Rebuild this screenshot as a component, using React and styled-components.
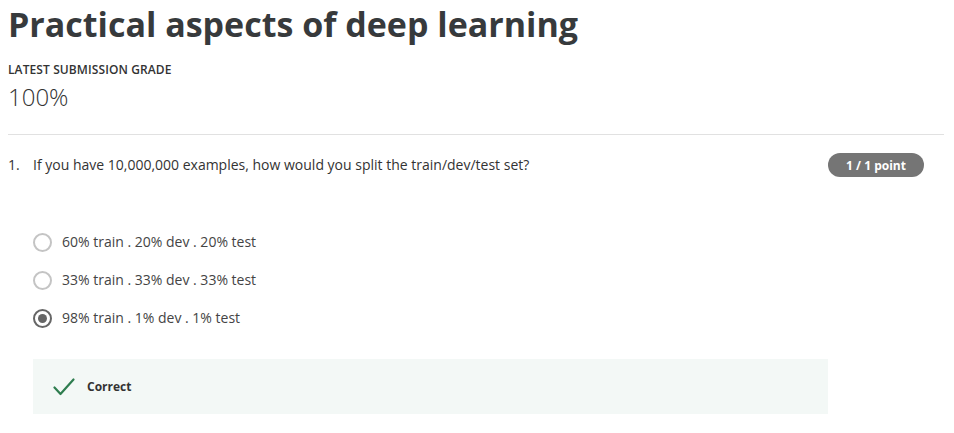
import React from "react";
import styled, { createGlobalStyle } from "styled-components";

const Global = createGlobalStyle`
  html, body { margin: 0; padding: 0; background: #fff; }
  body { font-family: "Open Sans", "Noto Sans", sans-serif; color: #333; }
`;

const Page = styled.div`
  padding: 0 10px 0 8px;
`;

const Title = styled.h1`
  margin: 0;
  padding-top: 3px;
  font-size: 34px;
  line-height: 42px;
  font-weight: 700;
  color: #373a3c;
`;

const GradeLabel = styled.div`
  margin-top: 17px;
  font-size: 12px;
  line-height: 16px;
  font-weight: 600;
  color: #333;
  letter-spacing: 0.1px;
`;

const GradeValue = styled.div`
  margin-top: 4px;
  font-size: 24px;
  line-height: 30px;
  font-weight: 300;
  color: #333;
`;

const Divider = styled.hr`
  margin: 22px 0 0;
  border: 0;
  border-top: 1px solid #e1e1e1;
`;

const QuestionRow = styled.div`
  display: flex;
  align-items: center;
  justify-content: space-between;
  margin-top: 18px;
  padding-right: 20px;
`;

const QuestionText = styled.div`
  display: flex;
  font-size: 14px;
  line-height: 20px;
  color: #333;
`;

const QNum = styled.span`
  width: 25px;
`;

const Badge = styled.span`
  display: inline-flex;
  align-items: center;
  justify-content: center;
  width: 96px;
  height: 24px;
  border-radius: 12px;
  background: #757575;
  color: #fff;
  font-size: 12px;
  font-weight: 700;
`;

const Options = styled.div`
  display: flex;
  flex-direction: column;
  gap: 18px;
  margin-top: 55px;
  padding-left: 25px;
`;

const Option = styled.label`
  display: flex;
  align-items: center;
  gap: 10px;
  font-size: 14px;
  line-height: 20px;
  color: #444;
`;

const Radio = styled.span`
  box-sizing: border-box;
  width: 19px;
  height: 19px;
  border-radius: 50%;
  border: 2px solid ${(p) => (p.checked ? "#666" : "#c4c4c4")};
  display: flex;
  align-items: center;
  justify-content: center;
  &::after {
    content: "";
    width: 9px;
    height: 9px;
    border-radius: 50%;
    background: #666;
    display: ${(p) => (p.checked ? "block" : "none")};
  }
`;

const Feedback = styled.div`
  display: flex;
  align-items: center;
  gap: 12px;
  margin: 31px 0 0 25px;
  width: 795px;
  height: 55px;
  box-sizing: border-box;
  padding-left: 20px;
  background: #f3f8f6;
`;

const FeedbackText = styled.span`
  font-size: 12px;
  font-weight: 700;
  color: #333;
`;

const options = [
  "60% train . 20% dev . 20% test",
  "33% train . 33% dev . 33% test",
  "98% train . 1% dev . 1% test",
];

export default function App() {
  return (
    <Page>
      <Global />
      <Title>Practical aspects of deep learning</Title>
      <GradeLabel>LATEST SUBMISSION GRADE</GradeLabel>
      <GradeValue>100%</GradeValue>
      <Divider />
      <QuestionRow>
        <QuestionText>
          <QNum>1.</QNum>
          <span>If you have 10,000,000 examples, how would you split the train/dev/test set?</span>
        </QuestionText>
        <Badge>1 / 1 point</Badge>
      </QuestionRow>
      <Options>
        {options.map((o, i) => (
          <Option key={o}>
            <Radio checked={i === 2} />
            <span>{o}</span>
          </Option>
        ))}
      </Options>
      <Feedback>
        <svg width="22" height="18" viewBox="0 0 22 18" fill="none">
          <path d="M1.5 9.5 L7.5 16 L20.5 1.5" stroke="#2e7d4f" strokeWidth="2.2" strokeLinecap="round" strokeLinejoin="round" />
        </svg>
        <FeedbackText>Correct</FeedbackText>
      </Feedback>
    </Page>
  );
}
